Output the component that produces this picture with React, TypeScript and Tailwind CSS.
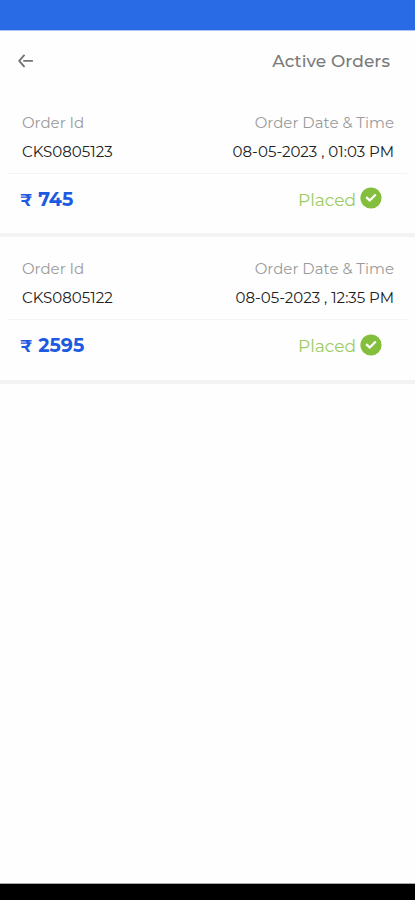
type Order = {
  id: string;
  date: string;
  price: string;
};

const orders: Order[] = [
  { id: "CKS0805123", date: "08-05-2023 , 01:03 PM", price: "745" },
  { id: "CKS0805122", date: "08-05-2023 , 12:35 PM", price: "2595" },
];

function BackArrow() {
  return (
    <svg width="16" height="14" viewBox="0 0 16 14" fill="none" stroke="#747474" strokeWidth="1.9" strokeLinecap="round" strokeLinejoin="round">
      <path d="M6 1.4 1.2 6.8 6 12.4M6 6.9H14.2" />
    </svg>
  );
}

function CheckBadge({ className }: { className: string }) {
  return (
    <svg className={className} width="22" height="22" viewBox="0 0 22 22" fill="none">
      <circle cx="11" cy="11" r="10.6" fill="#83bf3c" />
      <path d="M7 10.9 9.7 13.5 15 8.3" stroke="#fff" strokeWidth="2.3" strokeLinecap="square" />
    </svg>
  );
}

function OrderCard({ order, first }: { order: Order; first: boolean }) {
  return (
    <article className={`flex flex-col border-b-4 border-[#f3f3f3] pt-[22px] ${first ? "h-[146px]" : "h-[147px]"}`}>
      <div className="flex justify-between pr-[21px] pl-[22px]">
        <div>
          <p className="text-[15px] leading-5 font-normal text-[#9a9a9a]">Order Id</p>
          <p className="mt-[9px] text-[15px] leading-5 text-[#202020]">{order.id}</p>
        </div>
        <div className="text-right">
          <p className="text-[15px] leading-5 font-normal text-[#9a9a9a]">Order Date &amp; Time</p>
          <p className="mt-[9px] text-[15px] leading-5 text-[#202020]">{order.date}</p>
        </div>
      </div>
      <div className="mx-2 mt-[11px] h-px shrink-0 bg-[#f4f4f4]" />
      <div className="mt-[14px] flex h-6 items-center justify-between pr-[33px] pl-[20px]">
        <p className="flex items-center gap-[6px] text-[19px] leading-6 font-bold text-[#1c5ae2]">
          <span className="text-[17px]">₹</span>
          <span>{order.price}</span>
        </p>
        <div className="flex h-6 items-center gap-1">
          <span className="text-[17px] leading-6 font-normal text-[#9bcc62]">Placed</span>
          <CheckBadge className={first ? "mb-[4px]" : "mb-[2px]"} />
        </div>
      </div>
    </article>
  );
}

export default function App() {
  return (
    <div className="flex h-[900px] w-full flex-col overflow-hidden bg-[#fefefe] font-['Montserrat','Inter','Liberation_Sans',sans-serif]">
      <div className="h-[31px] shrink-0 border-b border-[#a9c3f5] bg-[#286be5]" />
      <header className="flex h-[60px] shrink-0 items-center justify-between pr-[25px] pl-[18px]">
        <BackArrow />
        <h1 className="text-[17px] leading-6 font-medium tracking-[0.08px] text-[#7a7a7a]">Active Orders</h1>
      </header>
      <main className="grow">
        {orders.map((order, index) => (
          <OrderCard key={order.id} order={order} first={index === 0} />
        ))}
      </main>
      <div className="h-[17px] shrink-0 border-t border-[#a8a8a8] bg-black" />
    </div>
  );
}
